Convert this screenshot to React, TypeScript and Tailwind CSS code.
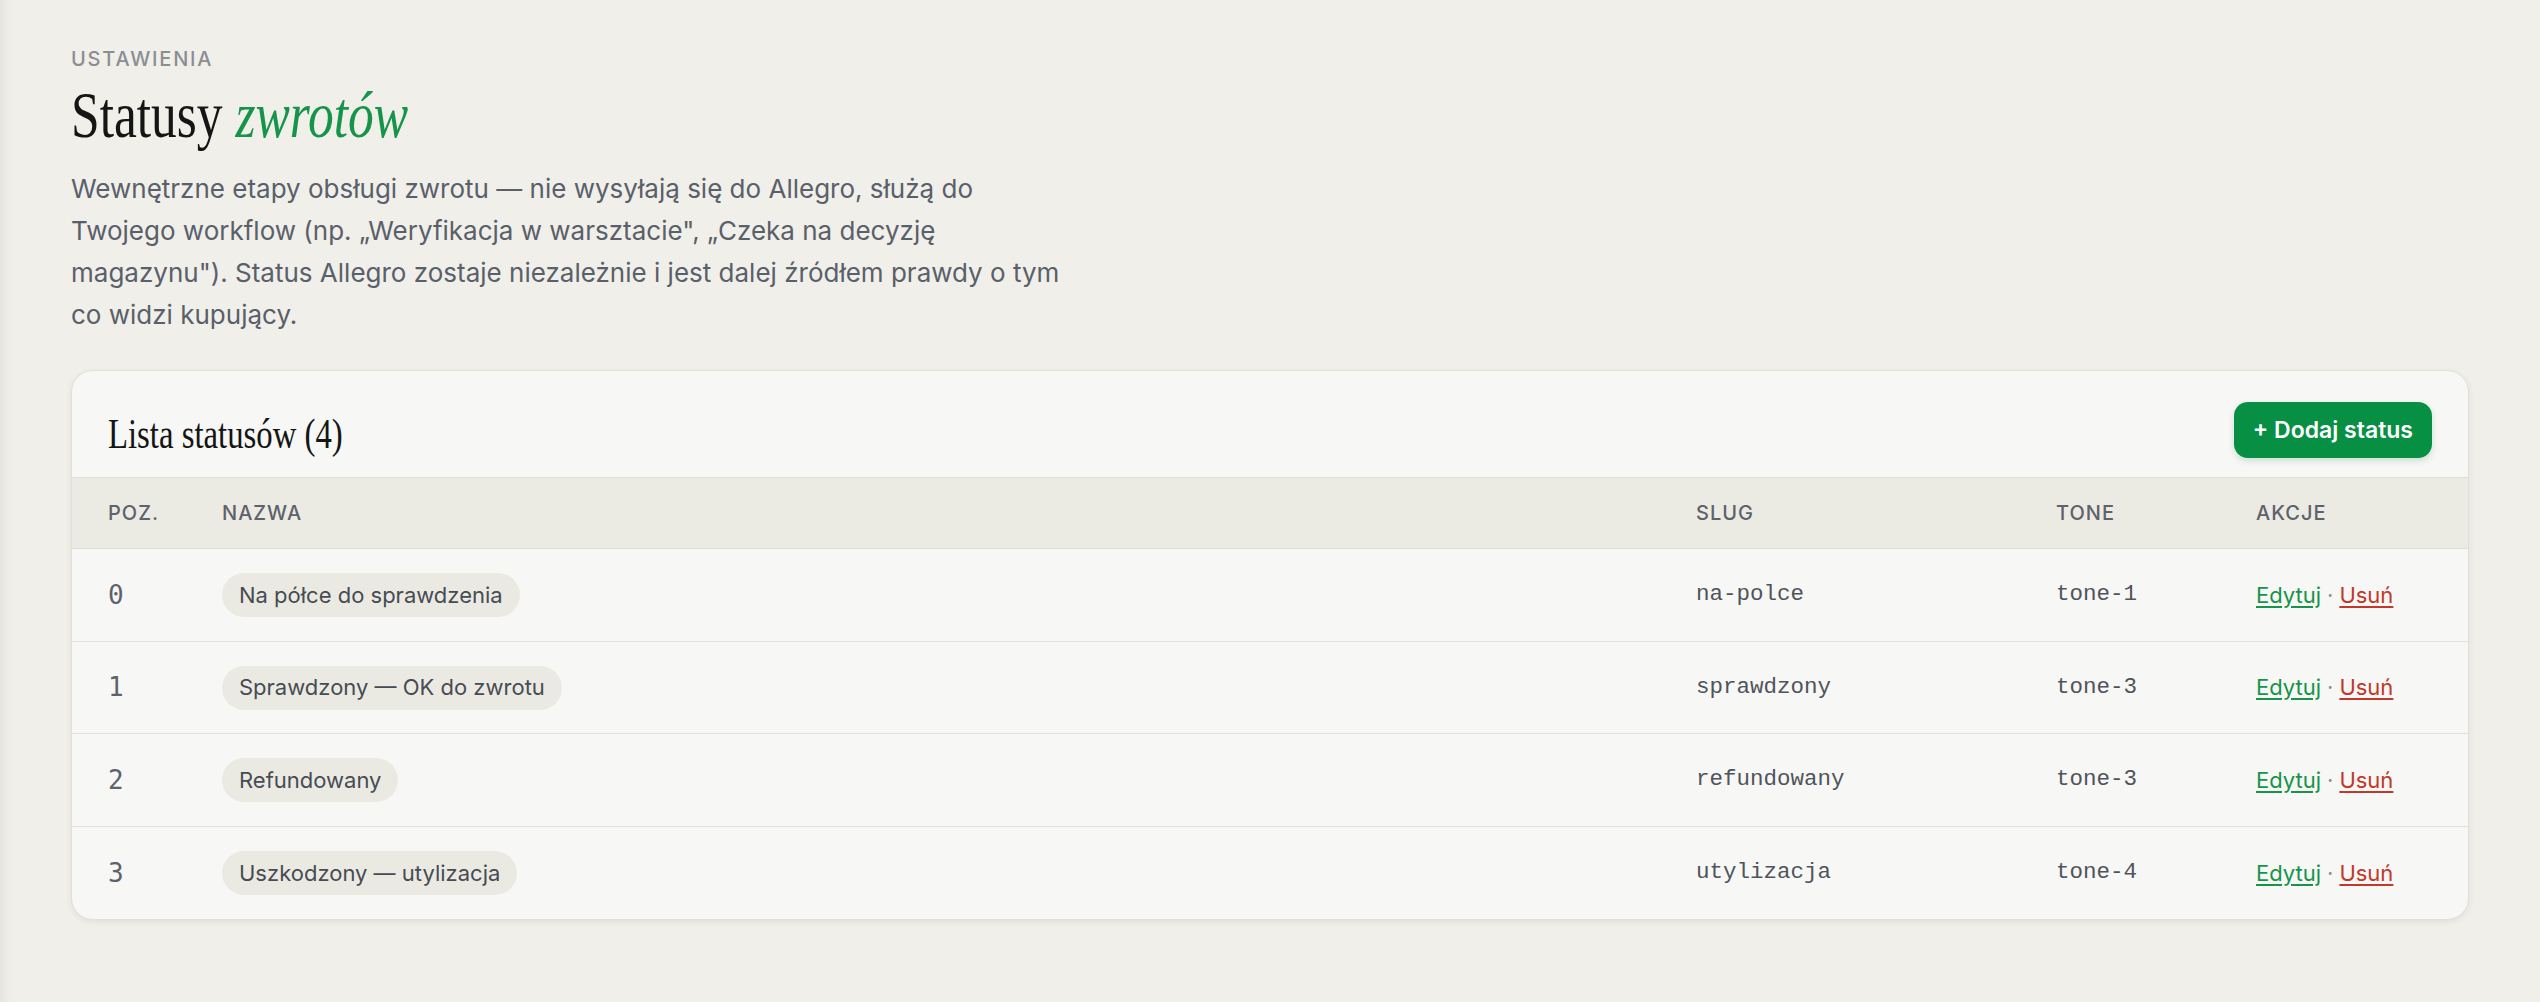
import React from "react";

type Status = { pos: number; name: string; slug: string; tone: string };

const statuses: Status[] = [
  { pos: 0, name: "Na półce do sprawdzenia", slug: "na-polce", tone: "tone-1" },
  { pos: 1, name: "Sprawdzony — OK do zwrotu", slug: "sprawdzony", tone: "tone-3" },
  { pos: 2, name: "Refundowany", slug: "refundowany", tone: "tone-3" },
  { pos: 3, name: "Uszkodzony — utylizacja", slug: "utylizacja", tone: "tone-4" },
];

const cols = "grid grid-cols-[114px_1fr_360px_200px_176px] items-center px-9";

export default function App() {
  return (
    <div className="min-h-[1002px] w-full bg-[#f0efe9] font-['Inter','Noto_Sans',sans-serif] shadow-[inset_14px_0_14px_-12px_rgba(0,0,0,0.07)]">
      <div className="px-[71px] pt-[47px] pb-[80px]">
        {/* Page header */}
        <div className="text-[20px] leading-[24px] font-medium tracking-[0.09em] uppercase text-[#8b8e93]">
          Ustawienia
        </div>
        <h1 className="mt-[8px] origin-left scale-x-[0.78] font-['Liberation_Serif','Times_New_Roman',serif] text-[66px] leading-[72px] font-normal text-[#151515]">
          Statusy <em className="italic text-[#16944a]">zwrotów</em>
        </h1>
        <p className="mt-[17px] max-w-[990px] text-[26px] leading-[42px] text-[#5a606a]">
          Wewnętrzne etapy obsługi zwrotu — nie wysyłają się do Allegro, służą do Twojego workflow (np. „Weryfikacja w warsztacie", „Czeka na decyzję magazynu"). Status Allegro zostaje niezależnie i jest dalej źródłem prawdy o tym co widzi kupujący.
        </p>

        {/* Status list card */}
        <section className="mt-[34px] overflow-hidden rounded-[22px] border border-[#e2e0d7] bg-[#f7f7f5] shadow-[0_2px_6px_rgba(60,55,40,0.08)]">
          <div className="flex items-end justify-between px-9 pt-[31px] pb-[19px]">
            <h2 className="origin-left scale-x-[0.78] font-['Liberation_Serif','Times_New_Roman',serif] text-[42px] leading-[48px] font-normal text-[#151515]">
              Lista statusów (4)
            </h2>
            <button className="h-[56px] rounded-[14px] bg-[#079044] px-[19px] text-[23px] font-semibold text-white shadow-[0_3px_6px_rgba(7,120,60,0.18)]">
              + Dodaj status
            </button>
          </div>

          <div className={`${cols} h-[72px] border-y border-[#e0ddd3] bg-[#ecebe3] text-[20px] font-medium tracking-[0.05em] text-[#5d626b]`}>
            <div>POZ.</div>
            <div>NAZWA</div>
            <div>SLUG</div>
            <div>TONE</div>
            <div>AKCJE</div>
          </div>

          {statuses.map((s, i) => (
            <div
              key={s.slug}
              className={`${cols} ${i % 2 === 0 ? "h-[93px]" : "h-[92px]"} ${i < statuses.length - 1 ? "border-b border-[#e4e1d8]" : ""}`}
            >
              <div className="font-['DejaVu_Sans_Mono','Liberation_Mono',monospace] text-[26px] text-[#5d626b]">
                {s.pos}
              </div>
              <div>
                <span className="inline-flex h-[44px] items-center rounded-full bg-[#ebeae2] px-[17px] text-[22px] text-[#474c54]">
                  {s.name}
                </span>
              </div>
              <div className="font-['Liberation_Mono','DejaVu_Sans_Mono',monospace] text-[22.5px] text-[#4f545c]">
                {s.slug}
              </div>
              <div className="font-['Liberation_Mono','DejaVu_Sans_Mono',monospace] text-[22.5px] text-[#4f545c]">
                {s.tone}
              </div>
              <div className="text-[22px]">
                <a href="#" className="text-[#16944a] underline underline-offset-[3px]">
                  Edytuj
                </a>
                <span className="mx-[6px] text-[#8b8e93]">·</span>
                <a href="#" className="text-[#c0392b] underline underline-offset-[3px]">
                  Usuń
                </a>
              </div>
            </div>
          ))}
        </section>
      </div>
    </div>
  );
}
